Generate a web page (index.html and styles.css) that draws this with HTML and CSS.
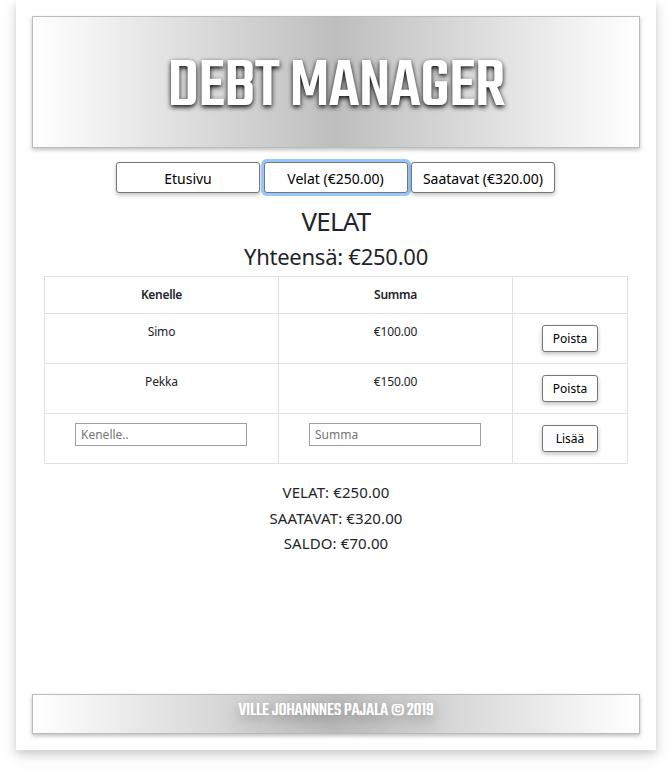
FILE: index.html
```html
<!DOCTYPE html>
<html lang="fi">
<head>
<meta charset="utf-8">
<title>Debt Manager</title>
<link rel="stylesheet" href="styles.css">
</head>
<body>
<div class="container">
  <header class="banner"><h1>DEBT MANAGER</h1></header>
  <nav class="nav">
    <button class="tab">Etusivu</button>
    <button class="tab active">Velat (€250.00)</button>
    <button class="tab">Saatavat (€320.00)</button>
  </nav>
  <main>
    <h2>VELAT</h2>
    <h3>Yhteensä: €250.00</h3>
    <table>
      <colgroup><col class="wide"><col class="wide"><col></colgroup>
      <thead><tr><th>Kenelle</th><th>Summa</th><th></th></tr></thead>
      <tbody>
        <tr><td>Simo</td><td>€100.00</td><td><button class="small">Poista</button></td></tr>
        <tr><td>Pekka</td><td>€150.00</td><td><button class="small">Poista</button></td></tr>
        <tr><td><input placeholder="Kenelle.."></td><td><input placeholder="Summa"></td><td><button class="small">Lisää</button></td></tr>
      </tbody>
    </table>
    <div class="totals">
      <p>VELAT: €250.00</p>
      <p>SAATAVAT: €320.00</p>
      <p>SALDO: €70.00</p>
    </div>
  </main>
  <footer class="banner">VILLE JOHANNNES PAJALA © 2019</footer>
</div>
</body>
</html>
```
FILE: styles.css
```css
* { box-sizing: border-box; }
body {
  margin: 0;
  min-height: 777px;
  background: #fff;
  color: #212529;
  font-family: "Trebuchet MS", "Noto Sans", sans-serif;
  font-size: 12px;
}
button, input { font-family: inherit; }
.container {
  width: 640px;
  height: 750px;
  margin: 0 auto;
  padding: 16px;
  display: flex;
  flex-direction: column;
  background: #fff;
  box-shadow: 0 4px 8px rgba(0, 0, 0, .15), 0 6px 20px rgba(0, 0, 0, .08);
}
.banner {
  border: 1px solid #bbb;
  background: linear-gradient(to right, #fff, #bebebe, #fff);
  box-shadow: 0 2px 4px rgba(0, 0, 0, .25);
  color: #fff;
  text-align: center;
  white-space: nowrap;
  font-family: Teko, Roboto, sans-serif;
}
header.banner { height: 132px; padding-top: 11px; display: flex; align-items: center; justify-content: center; }
h1 {
  margin: 0;
  font-size: 71.5px;
  line-height: 80px;
  font-weight: 500;
  letter-spacing: -.8px;
  text-shadow: 0 2px 5px #000;
}
.nav { display: flex; justify-content: center; gap: 3.5px; margin: 14px 1px 0 0; }
.tab, .small {
  background: #fff;
  border: 1px solid #777;
  border-radius: 3px;
  color: #000;
  box-shadow: 0 2px 4px rgba(0, 0, 0, .25);
  white-space: nowrap;
}
.tab { width: 144px; height: 31px; padding: 2px 0 0; font-size: 14px; }
.tab.active { box-shadow: 0 0 0 3px #96c6fd; }
main { text-align: center; padding: 0 12px; }
h2, h3, p { margin: 0; font-weight: 400; }
h2 { margin-top: 10px; font-size: 26px; line-height: 36px; letter-spacing: -.8px; }
h3 { font-size: 22px; line-height: 34px; letter-spacing: -.25px; padding-bottom: 3px; }
table {
  width: 584px;
  table-layout: fixed;
  border-collapse: collapse;
}
.wide { width: 234px; }
th, td { border: 1px solid #dee2e6; padding: 9px 0 0; vertical-align: top; line-height: 18px; letter-spacing: -.15px; }
th { height: 37px; font-weight: 600; letter-spacing: -.3px; }
td { height: 50px; }
.small { width: 56px; height: 27px; margin-top: 2px; padding: 0; font-size: 12px; display: inline-block; vertical-align: top; }
input {
  display: block;
  width: 172px;
  height: 23px;
  margin: 0 0 0 30px;
  padding: 0 5px;
  border: 1px solid #a0a0a0;
  font-size: 12px;
}
input::placeholder { color: #757575; }
.totals { margin-top: 16px; font-size: 15px; line-height: 25.6px; letter-spacing: .1px; }
footer.banner {
  height: 40px;
  margin-top: auto;
  font-size: 19px;
  line-height: 32px;
  font-weight: 500;
  letter-spacing: -.3px;
  text-shadow: 0 4px 8px rgba(0, 0, 0, .12), 0 6px 20px rgba(0, 0, 0, .25);
}
```
